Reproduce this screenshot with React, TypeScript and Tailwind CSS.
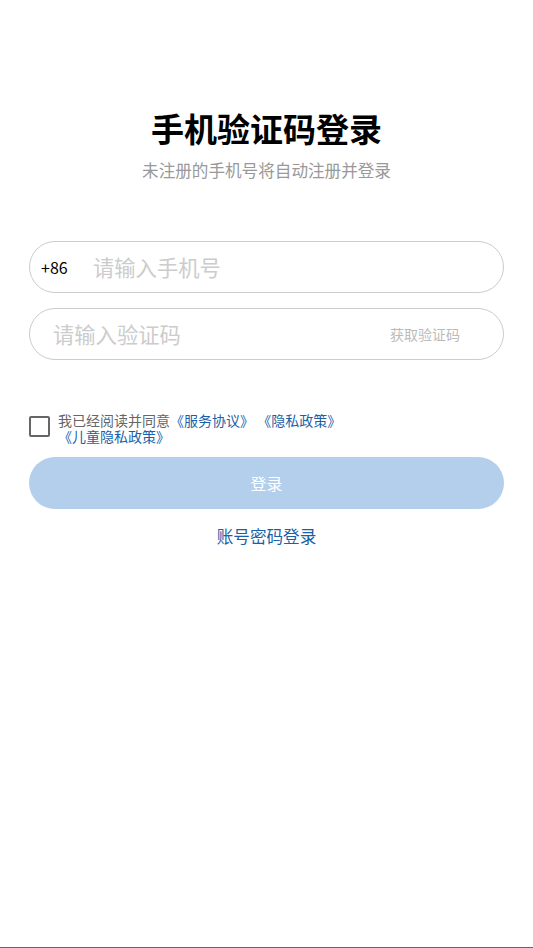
export default function App() {
    return (
        <div
            className="min-h-[948px] bg-white flex flex-col border-b border-[#666]"
            style={{ fontFamily: '"Noto Sans CJK SC", "Noto Sans", sans-serif' }}
        >
            <div className="px-[29px] pt-[106px] flex-1">
                {/* Header */}
                <h1 className="text-center text-[33px] leading-[44px] font-bold text-black">手机验证码登录</h1>
                <p className="text-center text-[16.6px] leading-[24px] text-[#999] mt-[8px]">
                    未注册的手机号将自动注册并登录
                </p>

                {/* Inputs */}
                <div className="mt-[59px] h-[52px] rounded-full border border-[#ccc] flex items-center pl-[11px]">
                    <span className="text-[16px] text-black w-[52px]">+86</span>
                    <span className="text-[21.3px] text-[#ccc]">请输入手机号</span>
                </div>
                <div className="mt-[15px] h-[52px] rounded-full border border-[#ccc] flex items-center justify-between pl-[23px] pr-[43px]">
                    <span className="text-[21.3px] text-[#ccc]">请输入验证码</span>
                    <span className="text-[14px] text-[#bbb]">获取验证码</span>
                </div>

                {/* Agreement */}
                <div className="mt-[52px] flex items-start gap-[8px]">
                    <div className="mt-[4px] w-[21px] h-[21px] border-2 border-[#666] rounded-[2px] shrink-0" />
                    <div className="text-[14px] leading-[16px] text-[#666]">
                        <div>
                            我已经阅读并同意<span className="text-[#1a5fa8]">《服务协议》 《隐私政策》</span>
                        </div>
                        <div className="text-[#1a5fa8]">《儿童隐私政策》</div>
                    </div>
                </div>

                {/* Submit */}
                <button className="mt-[13px] w-full h-[52px] rounded-full bg-[#b3cfeb] text-white text-[16px]">
                    登录
                </button>
                <div className="mt-[15px] text-center text-[16.6px] text-[#1a5fa8]">账号密码登录</div>
            </div>
        </div>
    );
}
